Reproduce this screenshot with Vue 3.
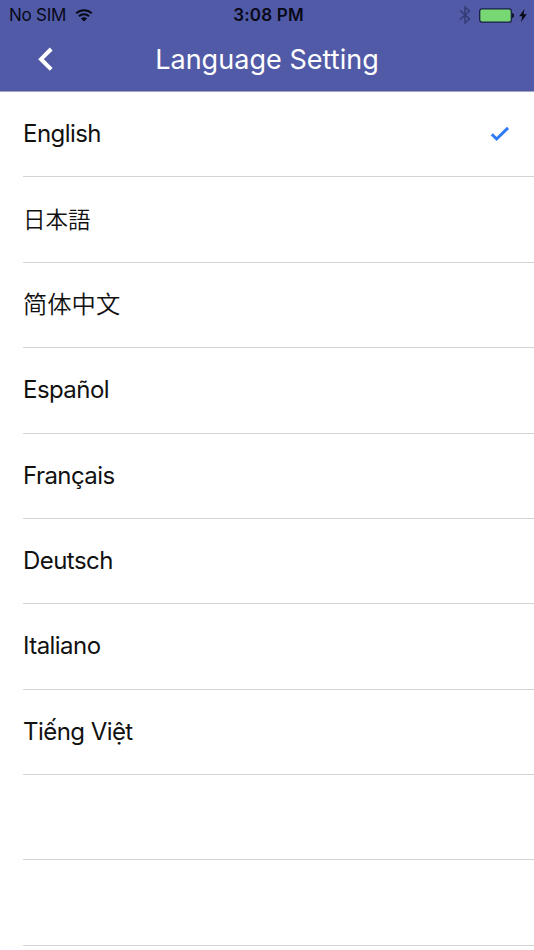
<template>
  <div class="screen">
    <header class="header">
      <div class="status-bar">
        <div class="carrier">
          <span class="sim">No SIM</span>
          <svg class="wifi" width="18" height="13" viewBox="0 0 18 13">
            <path d="M1.2 4.3C5.6 0.2 12.4 0.2 16.8 4.3" />
            <path d="M3.9 7.3C6.8 4.6 11.2 4.6 14.1 7.3" />
            <path class="dot" d="M5.9 9.4C7.7 7.8 10.3 7.8 12.1 9.4L9 12.5Z" />
          </svg>
        </div>
        <span class="time">3:08 PM</span>
        <div class="power">
          <svg class="bluetooth" width="12" height="20" viewBox="0 0 12 20">
            <path d="M1 5.5L10.5 14L6 18V2L10.5 6L1 14.5" />
          </svg>
          <svg class="battery" width="36" height="15" viewBox="0 0 36 15">
            <rect x="0.7" y="0.9" width="31.6" height="13.2" rx="2.2" fill="#77d873" stroke="#1c2047" stroke-width="1.3" />
            <path d="M33.2 5C35.5 5 35.5 10 33.2 10Z" fill="#080916" />
          </svg>
          <svg class="bolt" width="8" height="13" viewBox="0 0 8 13">
            <path d="M5.5 0L0.2 7.2H3.3L2 13L7.8 5.3H4.5Z" />
          </svg>
        </div>
      </div>
      <div class="nav-bar">
        <button class="back" aria-label="Back">
          <svg width="16" height="24" viewBox="0 0 16 24">
            <path d="M14.2 2L4 12.2L14.2 22.4" />
          </svg>
        </button>
        <h1>Language Setting</h1>
      </div>
    </header>

    <ul class="languages">
      <li v-for="lang in languages" :key="lang.code" :class="lang.code" @click="selected = lang.code">
        <span class="label">{{ lang.name }}</span>
        <svg v-if="selected === lang.code" class="check" width="20" height="16" viewBox="0 0 20 16">
          <path d="M1.8 8.2L6.6 13L18 1.9" />
        </svg>
      </li>
      <li v-for="n in 2" :key="n"></li>
    </ul>
  </div>
</template>

<script setup>
import { ref } from 'vue';

const selected = ref('en');

const languages = [
  { code: 'en', name: 'English' },
  { code: 'ja', name: '日本語' },
  { code: 'zh', name: '简体中文' },
  { code: 'es', name: 'Español' },
  { code: 'fr', name: 'Français' },
  { code: 'de', name: 'Deutsch' },
  { code: 'it', name: 'Italiano' },
  { code: 'vi', name: 'Tiếng Việt' }
];
</script>

<style>
body {
  margin: 0;
  background: #fff;
}
</style>

<style scoped>
.screen {
  width: 100%;
  height: 950px;
  overflow: hidden;
  background: #fff;
  font-family: Inter, "Noto Sans CJK SC", sans-serif;
}

svg {
  display: block;
  fill: none;
}

.header {
  box-sizing: border-box;
  height: 92px;
  background: #515aa7;
  border-bottom: 1px solid #a0a4c4;
}

.status-bar {
  display: grid;
  grid-template-columns: 1fr auto 1fr;
  align-items: center;
  height: 30px;
  padding: 0 7px 0 9px;
  color: #080916;
  font-size: 17px;
}

.carrier,
.power {
  display: flex;
  align-items: center;
}

.sim {
  letter-spacing: -0.25px;
}

.wifi {
  margin-left: 8.5px;
  stroke: #080916;
  stroke-width: 2;
}

.wifi .dot {
  fill: #080916;
  stroke: none;
}

.time {
  padding-left: 1px;
  font-weight: 600;
  letter-spacing: 0.2px;
}

.power {
  justify-content: flex-end;
}

.bluetooth {
  stroke: #343a73;
  stroke-width: 1.4;
}

.battery {
  margin-left: 8px;
}

.bolt {
  margin-left: 4px;
  fill: #080916;
}

.nav-bar {
  display: grid;
  grid-template-columns: 60px 1fr 60px;
  align-items: center;
  height: 58px;
}

.back {
  padding: 0 0 0 37px;
  border: none;
  background: none;
  cursor: pointer;
}

.back path {
  stroke: #fff;
  stroke-width: 4;
}

h1 {
  margin: 0;
  color: #fff;
  font-size: 27px;
  font-weight: 400;
  letter-spacing: 0.04px;
  text-align: center;
}

.languages {
  margin: 0;
  padding: 0 0 0 23px;
  list-style: none;
}

.languages li {
  display: flex;
  box-sizing: border-box;
  align-items: center;
  justify-content: space-between;
  height: 85.38px;
  padding-right: 24px;
  border-bottom: 1px solid #d4d4d6;
  color: #111;
  font-size: 24px;
  line-height: 30px;
}

.label {
  letter-spacing: -0.55px;
}

.ja .label {
  padding-bottom: 4px;
  font-family: "Noto Sans CJK JP", sans-serif;
  font-size: 22.5px;
  font-weight: 350;
  letter-spacing: 0;
}

.zh .label {
  padding-bottom: 1px;
  font-size: 24.3px;
  font-weight: 350;
  letter-spacing: 0;
}

.check path {
  stroke: #2f7bf6;
  stroke-width: 3;
}
</style>
